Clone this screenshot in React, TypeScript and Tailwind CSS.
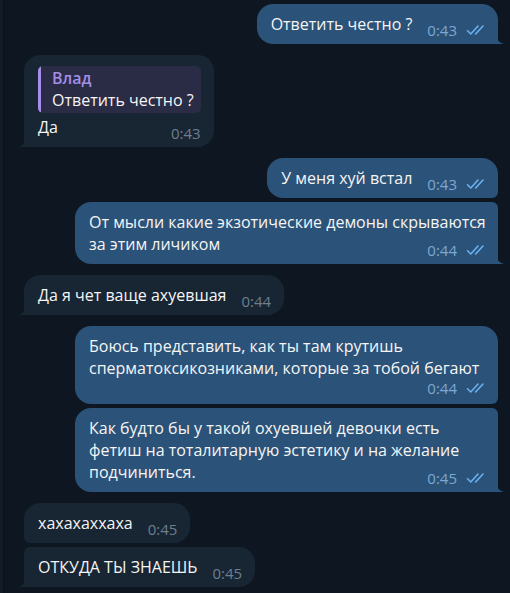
import React from "react";

type Msg = {
  out: boolean;
  lines: string[];
  time: string;
  timeOwnLine?: boolean;
  wide?: boolean;
  first?: boolean;
  last?: boolean;
  groupStart?: boolean;
  reply?: { name: string; text: string };
};

const messages: Msg[] = [
  { out: true, lines: ["Ответить честно ?"], time: "0:43", first: true, last: true, groupStart: true },
  {
    out: false,
    lines: ["Да"],
    time: "0:43",
    first: true,
    last: true,
    groupStart: true,
    reply: { name: "Влад", text: "Ответить честно ?" },
  },
  { out: true, lines: ["У меня хуй встал"], time: "0:43", first: true, groupStart: true },
  {
    out: true,
    lines: ["От мысли какие экзотические демоны скрываются", "за этим личиком"],
    time: "0:44",
    wide: true,
    last: true,
  },
  { out: false, lines: ["Да я чет ваще ахуевшая"], time: "0:44", first: true, last: true, groupStart: true },
  {
    out: true,
    lines: ["Боюсь представить, как ты там крутишь", "сперматоксикозниками, которые за тобой бегают"],
    time: "0:44",
    timeOwnLine: true,
    wide: true,
    first: true,
    groupStart: true,
  },
  {
    out: true,
    lines: [
      "Как будто бы у такой охуевшей девочки есть",
      "фетиш на тоталитарную эстетику и на желание",
      "подчиниться.",
    ],
    time: "0:45",
    wide: true,
    last: true,
  },
  { out: false, lines: ["хахахаххаха"], time: "0:45", first: true, groupStart: true },
  { out: false, lines: ["ОТКУДА ТЫ ЗНАЕШЬ"], time: "0:45", last: true },
];

function Checks() {
  return (
    <svg width="22" height="12" viewBox="0 0 22 12" fill="none" className="shrink-0">
      <path d="M1.5 6.8 L4.8 10 L12 2" stroke="#6ab2f2" strokeWidth="1.6" strokeLinecap="round" strokeLinejoin="round" />
      <path d="M9.6 10 L17 2" stroke="#6ab2f2" strokeWidth="1.6" strokeLinecap="round" strokeLinejoin="round" />
    </svg>
  );
}

function Tail({ out }: { out: boolean }) {
  return out ? (
    <svg width="9" height="16" viewBox="0 0 9 16" className="absolute bottom-0 -right-[6px]">
      <path d="M0 0 Q0 14 9 16 L0 16 Z" fill="#2b5278" />
    </svg>
  ) : (
    <svg width="9" height="16" viewBox="0 0 9 16" className="absolute bottom-0 -left-[6px]">
      <path d="M9 0 Q9 14 0 16 L9 16 Z" fill="#182533" />
    </svg>
  );
}

function Meta({ m }: { m: Msg }) {
  return (
    <span className={`flex items-center gap-[9px] shrink-0 ${m.timeOwnLine ? "translate-y-[1px]" : "translate-y-[3px]"}`}>
      <span className={`text-[15px] leading-[16px] ${m.out ? "text-[#7da8d3]" : "text-[#6d7f8f]"}`}>{m.time}</span>
      {m.out && <Checks />}
    </span>
  );
}

function Bubble({ m }: { m: Msg }) {
  const corners = m.out
    ? `rounded-l-[16px] ${m.first ? "rounded-tr-[16px]" : "rounded-tr-[6px]"} ${m.last ? "rounded-br-none" : "rounded-br-[6px]"}`
    : `rounded-r-[16px] ${m.first ? "rounded-tl-[16px]" : "rounded-tl-[6px]"} ${m.last ? "rounded-bl-none" : "rounded-bl-[6px]"}`;
  const head = m.lines.slice(0, m.timeOwnLine ? m.lines.length : m.lines.length - 1);
  const tail = m.timeOwnLine ? "" : m.lines[m.lines.length - 1];

  return (
    <div className={`flex ${m.out ? "justify-end" : "justify-start"} ${m.groupStart ? "mt-[11px]" : "mt-[4px]"} first:mt-[4px]`}>
      <div
        className={`relative flex flex-col ${m.reply ? "pt-[11px]" : "pt-[9px]"} pb-[9px] pl-[14px] ${m.out ? "pr-[10px] bg-[#2b5278]" : "pr-[13px] bg-[#182533]"} ${corners} ${m.wide ? "w-[423px]" : ""}`}
      >
        {m.reply && (
          <div className="mb-[3px] flex rounded-[5px] bg-[#2a2b44] overflow-hidden">
            <div className="w-[3px] bg-[#a48ee8]" />
            <div className="pl-[11px] pr-[7px] pt-[1px] pb-[2px] leading-[22px]">
              <div className="font-semibold text-[#a48ee8]">{m.reply.name}</div>
              <div className="text-[#f5f5f5]">{m.reply.text}</div>
            </div>
          </div>
        )}
        {head.map((l) => (
          <div key={l} className="leading-[22px] whitespace-nowrap">{l}</div>
        ))}
        <div className="flex items-end justify-between gap-[15px]">
          <span className="leading-[22px] whitespace-nowrap">{tail}</span>
          <Meta m={m} />
        </div>
        {m.last && <Tail out={m.out} />}
      </div>
    </div>
  );
}

export default function App() {
  return (
    <div className="w-[510px] h-[593px] overflow-hidden bg-[#0e1621] flex text-[16px] text-[#f5f5f5] font-['Open_Sans',sans-serif]">
      <div className="w-[4px] bg-[#131c27] border-r border-[#0a1016]" />
      <div className="flex-1 flex flex-col pl-[20px] pr-[12px]">
        {messages.map((m, i) => (
          <Bubble key={i} m={m} />
        ))}
      </div>
    </div>
  );
}
